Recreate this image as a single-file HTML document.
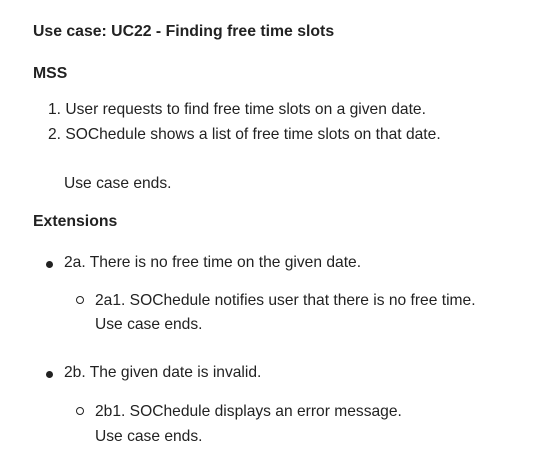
<!DOCTYPE html>
<html><head><meta charset="utf-8"><style>
body{margin:0;background:#fff;width:538px;height:455px;position:relative;overflow:hidden;font-family:"Liberation Sans",sans-serif;font-size:15.6px;color:#222}
.t{position:absolute;white-space:nowrap;line-height:18px}
.b{font-weight:bold;font-size:15.8px}
.dot{position:absolute;width:7px;height:7px;border-radius:50%;background:#222}
.circ{position:absolute;width:6px;height:6px;border-radius:50%;border:1.4px solid #222}
</style></head><body>
<div class="t b" style="left:33px;top:23px">Use case: UC22 - Finding free time slots</div>
<div class="t b" style="left:33px;top:65px">MSS</div>
<div class="t" style="left:48px;top:101px">1. User requests to find free time slots on a given date.</div>
<div class="t" style="left:48px;top:126px">2. SOChedule shows a list of free time slots on that date.</div>
<div class="t" style="left:64px;top:175px">Use case ends.</div>
<div class="t b" style="left:33px;top:213px">Extensions</div>
<div class="dot" style="left:46px;top:261px"></div>
<div class="t" style="left:64px;top:254px">2a. There is no free time on the given date.</div>
<div class="circ" style="left:76px;top:296px"></div>
<div class="t" style="left:95px;top:292px">2a1. SOChedule notifies user that there is no free time.</div>
<div class="t" style="left:95px;top:316px">Use case ends.</div>
<div class="dot" style="left:46px;top:371px"></div>
<div class="t" style="left:64px;top:364px">2b. The given date is invalid.</div>
<div class="circ" style="left:76px;top:407px"></div>
<div class="t" style="left:95px;top:403px">2b1. SOChedule displays an error message.</div>
<div class="t" style="left:95px;top:428px">Use case ends.</div>
</body></html>
